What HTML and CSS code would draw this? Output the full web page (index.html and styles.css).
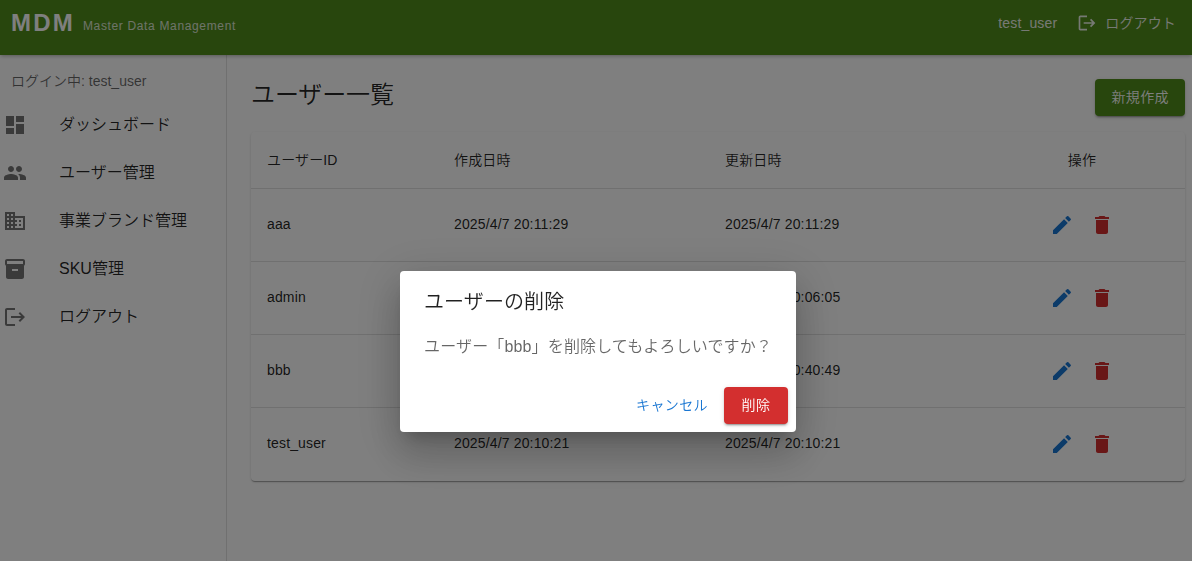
FILE: index.html
```html
<!DOCTYPE html>
<html lang="ja">

<head>
    <meta charset="UTF-8">
    <meta name="viewport" content="width=device-width, initial-scale=1.0">
    <title>MDM</title>
    <link rel="stylesheet" href="styles.css">
</head>

<body>
    <svg class="icon-defs" width="0" height="0">
        <symbol id="icon-dashboard" viewBox="0 0 24 24"><path d="M3 13h8V3H3v10zm0 8h8v-6H3v6zm10 0h8V11h-8v10zm0-18v6h8V3h-8z"/></symbol>
        <symbol id="icon-people" viewBox="0 0 24 24"><path d="M16 11c1.66 0 2.99-1.34 2.99-3S17.66 5 16 5c-1.66 0-3 1.34-3 3s1.34 3 3 3zm-8 0c1.66 0 2.99-1.34 2.99-3S9.66 5 8 5C6.34 5 5 6.34 5 8s1.34 3 3 3zm0 2c-2.33 0-7 1.17-7 3.5V19h14v-2.500c0-2.330-4.670-3.500-7-3.500zm8 0c-.29 0-.62.02-.97.05 1.160.840 1.970 1.970 1.970 3.450V19h6v-2.500c0-2.330-4.670-3.500-7-3.500z"/></symbol>
        <symbol id="icon-business" viewBox="0 0 24 24"><path d="M12 7V3H2v18h20V7H12zM6 19H4v-2h2v2zm0-4H4v-2h2v2zm0-4H4V9h2v2zm0-4H4V5h2v2zm4 12H8v-2h2v2zm0-4H8v-2h2v2zm0-4H8V9h2v2zm0-4H8V5h2v2zm10 12h-8v-2h2v-2h-2v-2h2v-2h-2V9h8v10zm-2-8h-2v2h2v-2zm0 4h-2v2h2v-2z"/></symbol>
        <symbol id="icon-inventory" viewBox="0 0 24 24"><path d="M20 2H4c-1 0-2 .9-2 2v3.010c0 .720.430 1.340 1 1.690V20c0 1.100 1.100 2 2 2h14c.9 0 2-.9 2-2V8.700c.570-.350 1-.970 1-1.690V4c0-1.100-1-2-2-2zm-5 12H9v-2h6v2zm5-7H4V4h16v3z"/></symbol>
        <symbol id="icon-logout" viewBox="0 0 24 24"><path d="m17 7-1.410 1.410L18.170 11H8v2h10.170l-2.580 2.580L17 17l5-5zM4 5h8V3H4c-1.100 0-2 .9-2 2v14c0 1.100.9 2 2 2h8v-2H4V5z"/></symbol>
        <symbol id="icon-edit" viewBox="0 0 24 24"><path d="M3 17.250V21h3.750L17.810 9.940l-3.750-3.750L3 17.250zM20.710 7.040c.39-.39.39-1.020 0-1.410l-2.340-2.340a.9959.9959 0 0 0-1.410 0l-1.830 1.830 3.750 3.750 1.830-1.830z"/></symbol>
        <symbol id="icon-delete" viewBox="0 0 24 24"><path d="M6 19c0 1.100.9 2 2 2h8c1.100 0 2-.9 2-2V7H6v12zM19 4h-3.500l-1-1h-5l-1 1H5v2h14V4z"/></symbol>
    </svg>

    <header class="app-bar">
        <div class="brand">
            <span class="logo">MDM</span>
            <span class="tagline">Master Data Management</span>
        </div>
        <div class="account">
            <span>test_user</span>
            <a class="logout"><svg class="icon icon-small"><use href="#icon-logout"/></svg><span>ログアウト</span></a>
        </div>
    </header>

    <div class="layout">
        <nav class="sidebar">
            <p class="login-name">ログイン中: test_user</p>
            <ul class="menu">
                <li><svg class="icon"><use href="#icon-dashboard"/></svg><span>ダッシュボード</span></li>
                <li><svg class="icon"><use href="#icon-people"/></svg><span>ユーザー管理</span></li>
                <li><svg class="icon"><use href="#icon-business"/></svg><span>事業ブランド管理</span></li>
                <li><svg class="icon"><use href="#icon-inventory"/></svg><span>SKU管理</span></li>
                <li><svg class="icon"><use href="#icon-logout"/></svg><span>ログアウト</span></li>
            </ul>
        </nav>

        <main class="content">
            <div class="page-head">
                <h1>ユーザー一覧</h1>
                <button class="button button-green">新規作成</button>
            </div>
            <table class="user-table">
                <colgroup>
                    <col class="col-id">
                    <col class="col-date">
                    <col class="col-date">
                    <col>
                </colgroup>
                <thead>
                    <tr>
                        <th>ユーザーID</th>
                        <th>作成日時</th>
                        <th>更新日時</th>
                        <th class="actions">操作</th>
                    </tr>
                </thead>
                <tbody>
                    <tr>
                        <td>aaa</td>
                        <td>2025/4/7 20:11:29</td>
                        <td>2025/4/7 20:11:29</td>
                        <td class="actions"><div class="row-icons"><svg class="icon edit"><use href="#icon-edit"/></svg><svg class="icon delete"><use href="#icon-delete"/></svg></div></td>
                    </tr>
                    <tr>
                        <td>admin</td>
                        <td>2025/4/7 20:06:05</td>
                        <td>2025/4/7 20:06:05</td>
                        <td class="actions"><div class="row-icons"><svg class="icon edit"><use href="#icon-edit"/></svg><svg class="icon delete"><use href="#icon-delete"/></svg></div></td>
                    </tr>
                    <tr>
                        <td>bbb</td>
                        <td>2025/4/7 20:40:49</td>
                        <td>2025/4/7 20:40:49</td>
                        <td class="actions"><div class="row-icons"><svg class="icon edit"><use href="#icon-edit"/></svg><svg class="icon delete"><use href="#icon-delete"/></svg></div></td>
                    </tr>
                    <tr>
                        <td>test_user</td>
                        <td>2025/4/7 20:10:21</td>
                        <td>2025/4/7 20:10:21</td>
                        <td class="actions"><div class="row-icons"><svg class="icon edit"><use href="#icon-edit"/></svg><svg class="icon delete"><use href="#icon-delete"/></svg></div></td>
                    </tr>
                </tbody>
            </table>
        </main>
    </div>

    <div class="backdrop">
        <div class="dialog" role="dialog">
            <h2>ユーザーの削除</h2>
            <p>ユーザー「bbb」を削除してもよろしいですか？</p>
            <div class="dialog-actions">
                <button class="button button-text">キャンセル</button>
                <button class="button button-red">削除</button>
            </div>
        </div>
    </div>
</body>

</html>
```
FILE: styles.css
```css
* {
    box-sizing: border-box;
}

body {
    margin: 0;
    height: 100vh;
    overflow: hidden;
    display: flex;
    flex-direction: column;
    background-color: #fff;
    color: rgba(0, 0, 0, 0.87);
    font-family: "Liberation Sans", "Noto Sans CJK JP", sans-serif;
    font-weight: 350;
}

.icon-defs {
    position: absolute;
}

.icon {
    width: 24px;
    height: 24px;
    fill: currentColor;
    flex-shrink: 0;
}

.icon-small {
    width: 20px;
    height: 20px;
}

/* top bar */
.app-bar {
    height: 55px;
    flex-shrink: 0;
    display: flex;
    justify-content: space-between;
    padding: 0 16px 0 11px;
    background-color: #508c1b;
    color: #fff;
    box-shadow: 0 2px 4px -1px rgba(0, 0, 0, 0.2), 0 1px 4px rgba(0, 0, 0, 0.12);
    z-index: 1;
}

.brand {
    display: flex;
    align-items: center;
    gap: 8px;
    height: 46px;
}

.logo {
    font-size: 24px;
    font-weight: 700;
    letter-spacing: 2.2px;
}

.tagline {
    padding-top: 6px;
    font-size: 12px;
    letter-spacing: 0.65px;
    opacity: 0.8;
}

.account {
    display: flex;
    align-items: center;
    gap: 20px;
    height: 46px;
    font-size: 14px;
    letter-spacing: 0.15px;
    opacity: 0.9;
}

.logout {
    display: flex;
    align-items: center;
    gap: 8px;
}

.logout span {
    padding-bottom: 3px;
}

/* side menu */
.layout {
    flex: 1;
    display: flex;
}

.sidebar {
    width: 227px;
    flex-shrink: 0;
    border-right: 1px solid rgba(0, 0, 0, 0.12);
}

.login-name {
    margin: 0;
    padding: 16px 11px 10px;
    font-size: 14px;
    line-height: 20px;
    color: rgba(0, 0, 0, 0.6);
}

.menu {
    list-style: none;
    margin: 0;
    padding: 0;
}

.menu li {
    display: flex;
    align-items: center;
    gap: 32px;
    height: 48px;
    padding-left: 3px;
}

.menu span {
    padding-bottom: 5px;
}

.menu .icon {
    color: rgba(0, 0, 0, 0.54);
}

/* user list */
.content {
    flex: 1;
    padding: 24px 7px 0 24px;
}

.page-head {
    display: flex;
    justify-content: space-between;
    margin-bottom: 16px;
}

.page-head h1 {
    margin: 0;
    font-size: 24px;
    font-weight: 350;
    line-height: 32px;
    letter-spacing: -0.1px;
}

.button {
    height: 37px;
    min-width: 64px;
    padding: 0 16px 3px;
    border: none;
    border-radius: 4px;
    font-family: inherit;
    font-size: 14px;
    font-weight: 350;
    letter-spacing: 0.4px;
    color: #fff;
    box-shadow: 0 3px 1px -2px rgba(0, 0, 0, 0.2), 0 2px 2px rgba(0, 0, 0, 0.14), 0 1px 5px rgba(0, 0, 0, 0.12);
}

.button-green {
    background-color: #508c1b;
}

.button-red {
    background-color: #d32f2f;
}

.button-text {
    padding: 0 8px 3px;
    background: none;
    color: #1976d2;
    box-shadow: none;
}

.user-table {
    width: 100%;
    table-layout: fixed;
    border-collapse: separate;
    border-spacing: 0;
    border-radius: 4px;
    font-size: 14px;
    letter-spacing: 0.15px;
    box-shadow: 0 2px 1px -1px rgba(0, 0, 0, 0.2), 0 1px 1px rgba(0, 0, 0, 0.14), 0 1px 3px rgba(0, 0, 0, 0.12);
}

.col-id {
    width: 187px;
}

.col-date {
    width: 271px;
}

.user-table th,
.user-table td {
    padding: 0 16px 2px;
    border-bottom: 1px solid rgba(224, 224, 224, 1);
    text-align: left;
    font-weight: 350;
}

.user-table th {
    height: 57px;
}

.user-table td {
    height: 73px;
}

.user-table .actions {
    text-align: center;
    padding-right: 17px;
}

.user-table td.actions {
    padding-right: 18px;
    padding-bottom: 0;
}

.user-table tbody tr:last-child td {
    border-bottom-color: transparent;
}

.row-icons {
    display: flex;
    justify-content: center;
    gap: 16px;
}

.edit {
    color: #1976d2;
}

.delete {
    color: #d32f2f;
}

/* confirm dialog */
.backdrop {
    position: fixed;
    inset: 0;
    z-index: 10;
    display: flex;
    justify-content: center;
    align-items: flex-start;
    padding-top: 271px;
    padding-left: 4px;
    background-color: rgba(0, 0, 0, 0.5);
}

.dialog {
    width: 396px;
    height: 161px;
    border-radius: 4px;
    background-color: #fff;
    box-shadow: 0 11px 15px -7px rgba(0, 0, 0, 0.2), 0 24px 38px 3px rgba(0, 0, 0, 0.14), 0 9px 46px 8px rgba(0, 0, 0, 0.12);
}

.dialog h2 {
    margin: 0;
    padding: 15px 24px 17px;
    font-size: 20px;
    font-weight: 350;
    line-height: 32px;
    letter-spacing: 0.1px;
}

.dialog p {
    margin: 0;
    padding: 0 24px 20px;
    font-size: 16px;
    line-height: 24px;
    letter-spacing: 0.15px;
    white-space: nowrap;
    color: rgba(0, 0, 0, 0.6);
}

.dialog-actions {
    display: flex;
    justify-content: flex-end;
    gap: 8px;
    padding: 8px;
}
```
